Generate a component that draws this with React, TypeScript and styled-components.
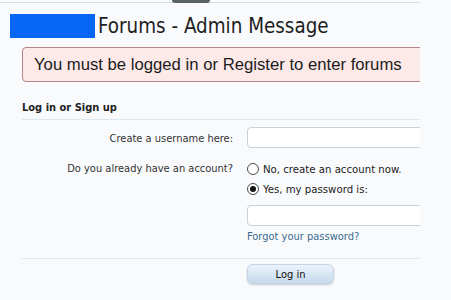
import React from "react";
import styled, { createGlobalStyle } from "styled-components";

const Global = createGlobalStyle`
  html, body { margin: 0; padding: 0; background: #f9fafc; }
  body { width: 451px; height: 300px; overflow: hidden; }
`;

const Page = styled.div`
  width: 420px;
  height: 300px;
  overflow: hidden;
  position: relative;
  background: #f9fafc;
`;

const TopLine = styled.div`
  height: 2px;
  border-bottom: 1px solid #cfe0ea;
  display: flex;
  justify-content: flex-start;
`;

const Tab = styled.div`
  margin-left: 172px;
  width: 38px;
  height: 3px;
  background: #5a6264;
  border-radius: 0 0 4px 4px;
`;

const TitleRow = styled.div`
  display: flex;
  align-items: center;
  padding: 11px 0 0 10px;
  height: 24px;
`;

const Redact = styled.div`
  width: 85px;
  height: 24px;
  background: #0565f5;
`;

const Title = styled.h1`
  margin: 0 0 0 3px;
  font-family: "DejaVu Sans Condensed", "DejaVu Sans", sans-serif;
  font-weight: normal;
  font-size: 20.4px;
  color: #1e1e1e;
  line-height: 24px;
`;

const ErrorBox = styled.div`
  margin: 9px 0 0 22px;
  width: 420px;
  height: 35px;
  box-sizing: border-box;
  background: #fde9e8;
  border: 1px solid #b48586;
  border-radius: 4px 0 0 4px;
  display: flex;
  align-items: center;
  padding-left: 11px;
  font-family: "Liberation Sans", Arial, sans-serif;
  font-size: 16.7px;
  color: #1c1c1c;
`;

const Form = styled.div`
  margin: 19px 0 0 22px;
  font-family: "DejaVu Sans Condensed", "DejaVu Sans", sans-serif;
  font-size: 11px;
  color: #333;
`;

const SectionHead = styled.div`
  font-weight: bold;
  color: #222;
  padding-bottom: 5px;
  border-bottom: 1px solid #dfe7ee;
`;

const Row = styled.div<{ $top: number }>`
  display: grid;
  grid-template-columns: 211px 1fr;
  column-gap: 14px;
  margin-top: ${(p) => p.$top}px;
  align-items: start;
`;

const Label = styled.div<{ $pad: number }>`
  text-align: right;
  padding-top: ${(p) => p.$pad}px;
  color: #333;
`;

const Field = styled.div`
  display: flex;
  flex-direction: column;
`;

const Input = styled.div<{ $top?: number }>`
  margin-top: ${(p) => p.$top ?? 0}px;
  width: 200px;
  height: 21px;
  box-sizing: border-box;
  background: #fff;
  border: 1px solid #c9d0d6;
  border-radius: 4px 0 0 4px;
`;

const RadioLine = styled.label<{ $top?: number }>`
  display: flex;
  align-items: center;
  gap: 4px;
  margin-top: ${(p) => p.$top ?? 0}px;
  height: 14px;
  color: #222;
  font-size: 11.3px;
`;

const Radio = styled.span<{ $on?: boolean }>`
  width: 10px;
  height: 10px;
  border-radius: 50%;
  border: 1px solid #4a4a4a;
  background: #fff;
  display: inline-flex;
  align-items: center;
  justify-content: center;
  &::after {
    content: "";
    width: 6px;
    height: 6px;
    border-radius: 50%;
    background: ${(p) => (p.$on ? "#111" : "transparent")};
  }
`;

const Link = styled.a`
  margin-top: 4px;
  color: #3b6a8e;
  text-decoration: none;
`;

const Divider = styled.div`
  margin-top: 15px;
  border-top: 1px solid #dfe9ee;
`;

const ButtonRow = styled.div`
  display: grid;
  grid-template-columns: 211px 1fr;
  column-gap: 14px;
  margin-top: 5px;
`;

const Button = styled.button`
  grid-column: 2;
  width: 87px;
  height: 20px;
  border: 1px solid #c3d3e2;
  border-radius: 6px;
  background: linear-gradient(#ecf3fa, #c5d9ec);
  box-shadow: 0 1px 2px rgba(80, 110, 140, 0.35);
  font-family: "DejaVu Sans Condensed", "DejaVu Sans", sans-serif;
  font-size: 11px;
  color: #111;
  padding: 0;
`;

export default function App() {
  return (
    <>
      <Global />
      <Page>
        <TopLine>
          <Tab />
        </TopLine>
        <TitleRow>
          <Redact />
          <Title>Forums - Admin Message</Title>
        </TitleRow>
        <ErrorBox>You must be logged in or Register to enter forums</ErrorBox>
        <Form>
          <SectionHead>Log in or Sign up</SectionHead>
          <Row $top={7}>
            <Label $pad={5}>Create a username here:</Label>
            <Input />
          </Row>
          <Row $top={14}>
            <Label $pad={0}>Do you already have an account?</Label>
            <Field>
              <RadioLine>
                <Radio />
                No, create an account now.
              </RadioLine>
              <RadioLine $top={6}>
                <Radio $on />
                Yes, my password is:
              </RadioLine>
              <Input $top={9} />
              <Link href="#">Forgot your password?</Link>
            </Field>
          </Row>
          <Divider />
          <ButtonRow>
            <Button>Log in</Button>
          </ButtonRow>
        </Form>
      </Page>
    </>
  );
}
